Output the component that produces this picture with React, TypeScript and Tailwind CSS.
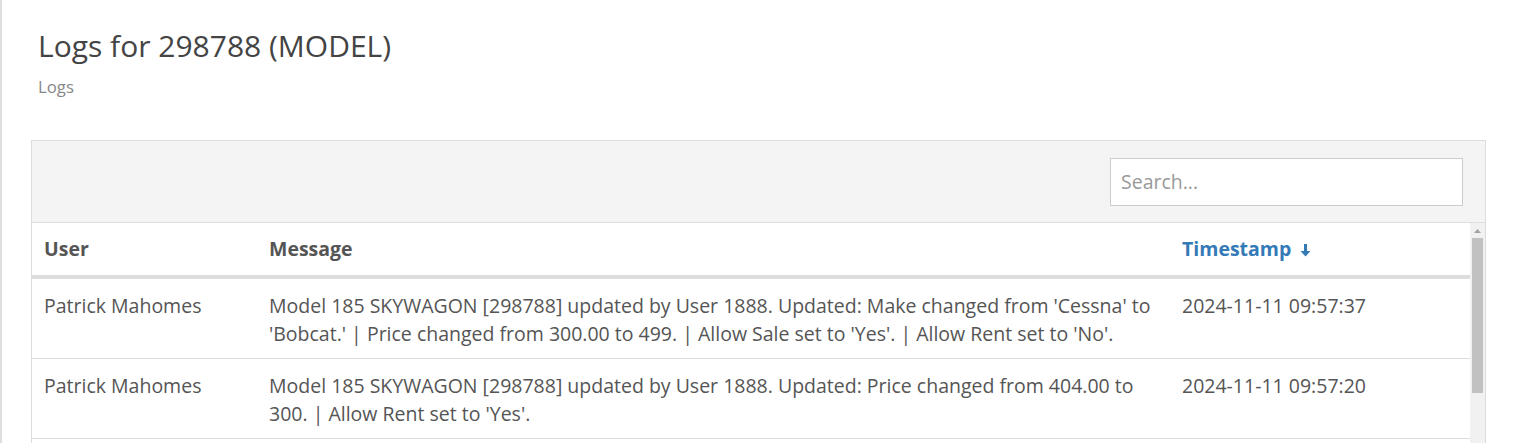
import React from "react";

const rows = [
  {
    user: "Patrick Mahomes",
    msg: "Model 185 SKYWAGON [298788] updated by User 1888. Updated: Make changed from 'Cessna' to 'Bobcat.' | Price changed from 300.00 to 499. | Allow Sale set to 'Yes'. | Allow Rent set to 'No'.",
    ts: "2024-11-11 09:57:37",
  },
  {
    user: "Patrick Mahomes",
    msg: "Model 185 SKYWAGON [298788] updated by User 1888. Updated: Price changed from 404.00 to 300. | Allow Rent set to 'Yes'.",
    ts: "2024-11-11 09:57:20",
  },
];

export default function App() {
  return (
    <div
      className="h-[443px] overflow-hidden bg-white border-l-2 border-[#dedede] text-[#555]"
      style={{ fontFamily: "'Open Sans', sans-serif" }}
    >
      <div className="pl-[36px] pt-[26px]">
        <h1 className="text-[30px] leading-[40px] text-[#444]">Logs for 298788 (MODEL)</h1>
        <div className="mt-[10px] text-[16.8px] leading-[22px] text-[#888]">Logs</div>
      </div>
      <div className="ml-[29px] mr-[31px] mt-[42px] border border-[#dddddd] h-[320px]">
        <div className="h-[82px] bg-[#f4f4f4] border-b border-[#dddddd] flex items-center justify-end pr-[22px]">
          <div className="w-[353px] h-[48px] bg-white border border-[#cccccc] flex items-center px-[10px] text-[19.5px] text-[#999]">
            Search...
          </div>
        </div>
        <div className="flex h-full">
          <div className="flex-1">
            <div className="flex h-[56px] items-center border-b-[4px] border-[#dddddd] text-[19.5px] font-bold">
              <div className="w-[225px] pl-[12px]">User</div>
              <div className="w-[913px] pl-[12px]">Message</div>
              <div className="flex-1 pl-[12px] text-[#337ab7] flex items-center gap-[9px]">
                Timestamp
                <svg width="11" height="14" viewBox="0 0 11 14" className="mt-[1px]">
                  <rect x="4" y="1" width="3" height="8" fill="#337ab7" />
                  <path d="M0.5 8 L10.5 8 L5.5 13.5 Z" fill="#337ab7" />
                </svg>
              </div>
            </div>
            {rows.map((r, i) => (
              <div key={i} className="flex border-b border-[#dddddd] text-[19.5px] leading-[28px] pt-[13px] pb-[10px]">
                <div className="w-[225px] px-[12px]">{r.user}</div>
                <div className="w-[913px] px-[12px]">{r.msg}</div>
                <div className="flex-1 px-[12px]">{r.ts}</div>
              </div>
            ))}
          </div>
          <div className="w-[15px] bg-[#f1f1f1] flex flex-col items-center pt-[6px]">
            <svg width="7" height="4" viewBox="0 0 7 4">
              <path d="M0 4 L3.5 0 L7 4 Z" fill="#a3a3a3" />
            </svg>
            <div className="mt-[5px] w-[11px] h-[155px] bg-[#c1c1c1]" />
          </div>
        </div>
      </div>
    </div>
  );
}
